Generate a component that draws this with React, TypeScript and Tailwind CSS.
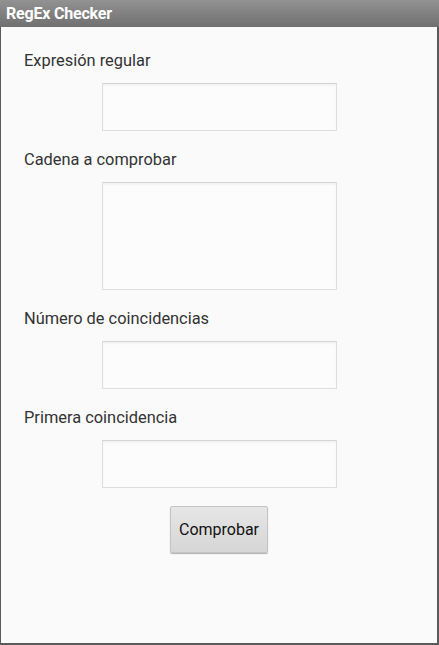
export default function App() {
  const fields: { label: string; tall?: boolean }[] = [
    { label: 'Expresión regular' },
    { label: 'Cadena a comprobar', tall: true },
    { label: 'Número de coincidencias' },
    { label: 'Primera coincidencia' },
  ];

  return (
    <div className="w-[439px] h-[645px] flex flex-col bg-[#fafafa] font-['Roboto',sans-serif] overflow-hidden">
      {/* title bar */}
      <div className="h-[27px] shrink-0 flex items-center px-[6px] bg-gradient-to-b from-[#929292] to-[#707070]">
        <span className="text-white font-bold text-[16px] leading-none tracking-[-0.2px]">RegEx Checker</span>
      </div>

      <div className="flex-1 flex flex-col border-l border-r-2 border-b-2 border-[#5a5a5a] pt-[24px]">
        {fields.map((f, i) => (
          <div key={i} className="flex flex-col">
            <div className="pl-[23px] text-[16.4px] leading-[20px] text-[#333] h-[20px]">{f.label}</div>
            <div className="flex justify-center mt-[12px] mb-[19px]">
              <div
                className={`w-[235px] ${f.tall ? 'h-[108px]' : 'h-[48px]'} bg-[#fcfcfc] border border-[#dedede] border-t-[#d4d4d4] shadow-[inset_0_2px_2px_rgba(0,0,0,0.04)]`}
              />
            </div>
          </div>
        ))}

        <div className="flex justify-center mt-[-1px]">
          <button className="w-[98px] h-[47px] rounded-[2px] bg-gradient-to-b from-[#e6e6e6] to-[#d6d6d6] border border-[#c4c4c4] shadow-[0_1px_1px_rgba(0,0,0,0.3)] text-[16px] text-[#111]">
            Comprobar
          </button>
        </div>
      </div>
    </div>
  );
}
